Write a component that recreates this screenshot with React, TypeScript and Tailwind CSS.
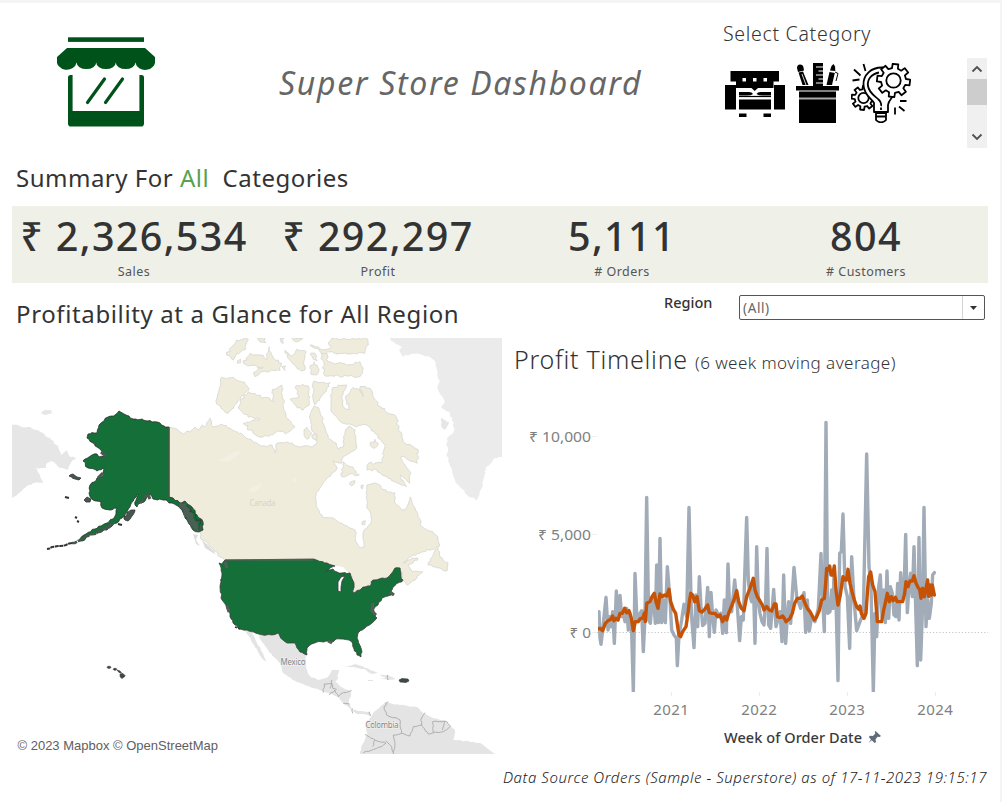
import React from "react";

type Pt = [number, number];

const toPoints = (flat: string): Pt[] =>
  flat
    .trim()
    .split(/\s+/)
    .map((p) => p.split(",").map(Number) as Pt);

/* Breaks each edge of a coastline into small, slightly displaced steps. */
const coast = (flat: string, amp = 1.2, closed = true, scale = 1, dx = 0, dy = 0): string => {
  const pts = toPoints(flat).map(([x, y]) => [x * scale + dx, y * scale + dy] as Pt);
  let seed = 17;
  const rnd = () => {
    seed = (seed * 16807) % 2147483647;
    return seed / 2147483647 - 0.5;
  };
  const out: string[] = [];
  const n = closed ? pts.length : pts.length - 1;
  for (let i = 0; i < n; i++) {
    const [x1, y1] = pts[i];
    const [x2, y2] = pts[(i + 1) % pts.length];
    const len = Math.hypot(x2 - x1, y2 - y1);
    out.push(`${x1.toFixed(1)},${y1.toFixed(1)}`);
    if (len > 55) continue;
    const steps = Math.floor(len / 2.2);
    for (let s = 1; s < steps; s++) {
      const t = s / steps;
      out.push(`${(x1 + (x2 - x1) * t + rnd() * amp * 2).toFixed(1)},${(y1 + (y2 - y1) * t + rnd() * amp * 2).toFixed(1)}`);
    }
  }
  if (!closed) out.push(pts[pts.length - 1].join(","));
  return "M" + out.join("L") + (closed ? "Z" : "");
};

const arctic = (flat: string) => coast(flat, 1.3, true, 1 / 3, 200, 330);
const south = (flat: string) => coast(flat, 0.6, false, 1 / 3, 200, 530);

const CANADA =
  "169,427 172,428 177,429 180,432 184,434 187,431 190,432 195,427 198,430 202,425 205,427 210,418 213,427 217,426 222,424 230,428 243,435 253,442 267,447 272,445 275,453 277,443 287,442 300,447 308,446 312,447 317,442 315,433 311,428 310,415 314,406 319,408 325,428 328,438 336,443 338,449 343,447 345,432 349,426 355,430 357,447 350,453 343,457 342,463 333,461 337,469 328,477 322,485 316,495 316,505 322,517 333,518 340,523 350,528 355,530 356,542 360,548 365,547 363,533 367,528 371,523 370,512 367,508 366,497 367,485 374,483 380,485 387,492 395,493 395,503 402,510 407,507 410,497 417,512 422,527 430,531 438,537 439,547 430,550 413,555 403,563 412,558 418,558 413,563 408,565 412,572 423,572 415,580 407,585 403,580 400,568 393,578 373,582 363,588 353,593 355,583 350,573 343,570 333,565 315,560 225,560 220,557 207,542 200,538 200,532 203,530 203,522 197,515 192,507 185,501 180,503 173,498 169,497";
const USA =
  "225,560 313,559 327,563 335,566 329,569 326,571 333,569 337,572 342,573 350,573 354,583 353,593 360,590 363,587 365,587 370,586 373,580 387,578 391,574 395,568 400,568 401,576 403,580 393,587 391,591 393,595 388,596 382,598 378,605 375,607 374,612 377,618 372,623 365,628 358,633 357,638 361,648 362,652 361,657 357,655 354,649 352,642 349,640 343,639 336,639 333,642 328,641 317,642 310,645 307,648 307,655 300,652 297,648 295,643 291,643 287,643 283,640 278,633 272,635 263,635 247,630 240,629 233,623 228,610 222,600 220,587 222,573 219,563 222,564";
const ALASKA =
  "119,411 124,414 129,416 133,419 142,419 147,421 152,422 160,423 164,426 169,427 169,497 173,498 180,503 185,501 192,507 197,515 203,522 203,530 199,532 193,530 188,522 185,518 182,510 178,506 172,503 163,500 153,499 151,495 147,494 145,501 140,503 137,507 135,505 138,494 134,499 130,507 127,512 122,518 117,523 107,530 100,532 90,535 82,541 78,541 84,535 95,529 107,523 113,519 116,514 117,508 110,510 102,508 101,502 93,500 89,493 90,485 94,482 97,478 104,475 103,468 97,471 88,468 83,461 92,455 97,454 99,457 105,456 100,449 97,447 87,438 88,434 97,433 99,425 104,421 108,417 115,415";
const GREENLAND =
  "390,338 502,338 502,457 495,458 492,462 486,467 483,485 477,500 467,495 461,488 455,480 450,466 447,453 447,438 453,433 454,423 450,414 441,407 445,402 438,390 439,380 437,370 434,360 430,357 420,354 411,354 403,357 399,350 402,347 396,344";
const SIBERIA =
  "12,425 18,425 22,427 30,427 40,432 50,438 58,446 61,455 67,450 70,457 76,458 71,463 68,470 60,468 52,461 47,463 46,468 35,468 40,475 43,483 33,483 25,488 18,494 12,498";
const MEXICO =
  "257,632 278,633 287,643 295,643 300,652 306,655 306,668 310,676 318,680 326,678 328,677 332,670 339,670 337,680 335,682 343,688 351,692 349,703 353,710 360,711 370,712 371,716 363,714 357,714 345,705 338,697 323,691 310,687 297,682 283,673 280,663 268,650 262,642";
const SOUTH_AMERICA =
  "360,754 362,745 367,735 366,730 369,720 374,712 385,702 390,703 400,705 417,707 423,713 433,718 443,720 455,730 453,740 465,741 480,743 488,749 495,754";

const ARCTIC_ISLANDS = [
  "62,145 100,142 125,155 148,178 115,210 85,250 70,240 50,222 58,180",
  "120,215 145,185 165,190 185,205 210,205 222,215 218,178 245,165 248,200 260,265 285,290 260,310 230,305 205,320 175,320 150,300 130,280 180,268 145,262 115,235",
  "80,75 95,50 110,30 145,28 135,60 110,70 100,90",
  "130,100 150,70 180,75 200,90 208,50 220,85 245,100 240,122 190,125 165,140 160,128 190,112 150,108",
  "255,60 275,78 290,58 315,62 315,120 297,118 285,105 262,82",
  "362,62 380,70 385,95 440,105 480,95 490,115 480,140 375,138",
  "330,45 355,50 370,60 395,50 385,38 400,25 500,25 505,45 495,70 450,72 400,68 365,70",
  "340,155 390,158 378,185 345,225 338,200",
  "285,172 308,162 325,168 328,225 305,240 270,208 298,200",
  "395,180 415,165 440,165 425,200 432,232 450,238 436,200 460,172 480,180 490,200 480,170 510,175 520,200 545,235 590,265 600,305 610,335 655,360 652,400 635,395 605,378 608,395 630,425 630,460 600,435 620,470 585,455 560,440 530,420 500,420 505,400 545,400 555,345 525,310 500,285 470,290 425,278 395,245",
  "425,440 430,395 450,410 478,435 450,432",
  "330,115 342,95 358,118 350,135 332,132",
  "510,345 525,328 535,340 525,355",
  "448,462 465,452 455,468",
  "245,110 258,108 255,122",
  "172,26 195,24 198,38 180,36",
  "240,26 252,25 250,40 244,38",
  "275,24 310,24 300,32 282,33",
  "330,72 345,70 352,92 340,88",
  "312,300 322,292 335,312 322,328 312,316",
  "335,318 350,312 348,330",
  "484,465 490,466 488,476 483,474",
  "112,100 122,88 122,98",
  "486,575 496,572 494,584 486,584",
];

/* Weekly profit, in thirds of a pixel on the plotting area. */
const WEEKLY =
  "27,635 30,715 33,733 38,690 43,640 48,592 54,690 58,650 62,680 68,635 73,730 79,573 84,660 90,586 95,650 100,640 105,665 110,625 115,690 120,640 125,695 130,875 135,520 140,640 145,665 150,640 155,632 160,755 165,650 170,292 176,660 181,670 186,610 191,595 196,670 200,495 205,668 210,415 215,668 220,600 226,668 232,500 240,600 245,690 252,705 259,715 262,797 267,705 275,660 282,613 290,650 297,322 304,640 312,743 318,585 323,680 328,530 333,620 338,677 345,670 353,562 358,710 363,577 368,650 373,697 378,630 388,650 393,640 398,700 403,600 409,698 414,492 419,630 425,635 434,540 442,620 449,722 454,650 460,660 465,500 470,352 475,540 480,590 485,605 490,540 495,730 500,440 505,600 510,640 516,665 522,675 527,600 531,445 536,675 542,685 551,568 558,680 565,655 570,635 576,725 581,525 587,730 592,650 596,605 602,670 607,580 612,502 620,590 632,625 638,590 642,578 647,697 652,600 658,693 665,650 675,665 685,625 693,460 698,600 703,695 708,67 713,640 720,635 725,570 729,625 732,520 738,600 744,842 749,460 754,455 759,342 765,560 772,590 779,745 785,470 792,600 800,692 810,665 820,640 830,162 837,500 843,560 850,875 855,640 860,710 866,560 871,525 876,650 881,570 886,668 891,513 896,655 901,560 907,580 912,645 918,650 923,550 927,660 932,518 937,600 942,580 947,403 952,638 957,560 962,520 967,590 972,440 977,620 982,797 987,412 992,780 997,640 1002,322 1008,680 1013,600 1018,655 1024,610 1028,525 1033,518";
const AVERAGE =
  "24,687 30,685 38,692 46,670 54,662 62,658 68,648 72,662 78,655 84,660 90,640 97,640 104,625 110,638 117,632 124,655 130,692 136,665 144,665 152,655 158,655 163,640 166,665 170,610 180,605 186,590 193,580 198,605 204,625 210,582 217,590 224,585 230,588 237,568 242,605 250,628 257,640 263,680 267,705 272,710 278,695 288,680 294,640 298,605 302,580 308,585 314,605 321,590 328,632 336,636 344,628 353,615 358,638 366,640 375,640 383,650 390,645 398,665 404,650 410,660 416,640 424,620 432,600 440,572 446,605 454,625 462,632 470,590 480,565 490,535 495,570 502,590 510,603 517,615 522,630 530,620 538,630 545,633 553,612 558,612 562,650 570,653 578,648 583,655 588,665 594,660 600,655 607,640 614,610 622,595 630,595 637,588 645,610 652,625 660,635 668,650 673,660 680,650 688,632 695,600 703,595 707,550 710,505 715,510 719,498 723,525 728,525 733,498 738,570 744,615 750,590 759,530 765,540 770,540 774,508 780,550 786,575 793,600 800,620 806,628 810,618 814,640 822,655 828,640 832,580 836,530 842,516 848,555 855,575 862,665 870,665 875,665 880,635 888,600 892,580 898,605 904,590 910,602 916,592 922,605 938,605 944,580 948,545 954,560 960,543 967,543 972,527 978,550 984,562 989,568 993,595 998,565 1003,590 1008,565 1013,540 1016,590 1020,555 1024,585 1027,555 1033,585";

const Land = ({ d, fill, stroke }: { d: string; fill: string; stroke?: string }) => (
  <path d={d} fill={fill} stroke={stroke ?? "none"} strokeWidth={0.8} strokeLinejoin="round" />
);

function StoreLogo() {
  return (
    <svg width="98" height="90" viewBox="57 37 98 90" className="shrink-0">
      <g fill="#00521b">
        <rect x="68" y="37.3" width="76" height="4.6" />
        <path d="M67 48H145L155 57V60A9.7 8.5 0 0 1 135.4 62.5A9.7 6.5 0 0 1 115.8 62.5A9.7 6.5 0 0 1 96.2 62.5A9.7 6.5 0 0 1 76.6 62.5A9.9 8.5 0 0 1 57 60V57Z" />
        <path d="M68 77.5Q68 75 70.5 75H72.6V111H139.4V75H141.5Q144 75 144 77.5V123.5Q144 126.6 141 126.6H71Q68 126.6 68 123.5Z" />
      </g>
      <g stroke="#00521b" strokeWidth="3.2" strokeLinecap="round">
        <path d="M104.5 79L87.5 102.5M122.5 79L105.5 102.5" />
      </g>
    </svg>
  );
}

function SofaIcon() {
  return (
    <svg width="60" height="46" viewBox="0 0 60 46">
      <path d="M5.5 0H54V10.500H48.5V17H33L29.700 20L26.500 17H11V10.500H5.5Z" fill="#000" />
      <path d="M0 14H11V38.5H0ZM49 14H60V38.5H49Z" fill="#000" />
      <path d="M14 21H24Q27 21 28 23Q26 24.500 22 24.500H14ZM46 21H35.500Q32.500 21 31.500 23Q33.500 24.500 37.500 24.500H46Z" fill="#000" />
      <path d="M14 28.500H46V38.500H14ZM14 42.500H21.500V46H14ZM38.500 42.500H46V46H38.500Z" fill="#000" />
      <path d="M14 25.500H46" stroke="#000" strokeWidth="1.200" />
      <path d="M17.500 7H21V10.500H17.500ZM28 7H31.500V10.500H28ZM38.500 7H42V10.500H38.500Z" fill="#fff" />
    </svg>
  );
}

function SuppliesIcon() {
  return (
    <svg width="43" height="60" viewBox="0 0 43 60">
      <path d="M17 0H27V23H17Z" fill="#000" />
      <path d="M20 4H27M22.500 8H27M20 12H27M22.500 16H27M20 20H27" stroke="#fff" strokeWidth="1" />
      <path d="M1 5Q1 1.500 4 1.500T7.500 4.500L8 7.500L2 9Z" fill="#000" />
      <path d="M2.500 9.500L7 8.600L12.500 22H6.500Z" fill="#000" />
      <path d="M6 11L10 22" stroke="#fff" strokeWidth=".8" />
      <path d="M35.500 3L37.500 1L39 3.500L39.300 8L34 7.500Z" fill="#000" />
      <path d="M33.500 9L38.800 10L36 22H30.500Z" fill="#000" />
      <path d="M39 9L42 10.500L40 18" fill="none" stroke="#000" strokeWidth="1" />
      <path d="M0 23H43V27.500H0ZM3 28.500H40V60H3Z" fill="#000" />
      <path d="M3 35.500H40" stroke="#aaa" strokeWidth="2" />
    </svg>
  );
}

/* Closed outline of a gear with square teeth. */
const gear = (cx: number, cy: number, ro: number, ri: number, teeth = 8) => {
  const out: string[] = [];
  for (let i = 0; i < teeth; i++) {
    const a = (i / teeth) * Math.PI * 2 + 0.12;
    [
      [ri, -0.24],
      [ro, -0.17],
      [ro, 0.17],
      [ri, 0.24],
    ].forEach(([r, o]) => out.push(`${(cx + r * Math.cos(a + o)).toFixed(2)},${(cy + r * Math.sin(a + o)).toFixed(2)}`));
  }
  return "M" + out.join("L") + "Z";
};

function TechIcon() {
  return (
    <svg width="60" height="60" viewBox="0 0 60 60" fill="none" stroke="#000" strokeWidth="1.8" strokeLinejoin="round">
      <path d={gear(12.5, 35, 12, 8.8)} />
      <circle cx="12.500" cy="35" r="5.2" />
      <path
        d="M32 4.500C20 4 12 12 12.500 22C13 32 20 35 23 40V49H37V42C37.500 38 40 36 42 33"
        fill="#fff"
      />
      <path d="M28 9.500C20 11 16 17 17 23C18 30 24 33 28 37C30 39 30.500 42 30 43" />
      <path d="M30 44.500V47" />
      <path d={gear(42.500, 17.500, 16.700, 12.500)} fill="#fff" />
      <circle cx="42.500" cy="17.500" r="7.200" />
      <path d="M25 50H35V57Q33 59.300 30 59.300T25 57ZM25 53.500H35" />
      <path d="M3 6.500L9.500 12.500M12.500 1L14.500 8M1.500 17.500L8.500 16.500M49 38H55.500M48 43.500L53.500 48M44 44.500V51.500" />
    </svg>
  );
}

function CategoryPicker() {
  return (
    <section className="w-[278px] pl-px">
      <h2 className="h-[38px] whitespace-nowrap pt-[1px] font-['Noto_Sans'] text-[19.5px] font-light leading-[26px] tracking-[0.7px] text-[#333]">
        Select Category
      </h2>
      <div className="flex justify-between">
        <div className="flex h-[60px] pl-[2px]">
          <button className="mt-[12px] block" aria-label="Furniture">
            <SofaIcon />
          </button>
          <button className="ml-[11px] mt-[5px] block" aria-label="Office Supplies">
            <SuppliesIcon />
          </button>
          <button className="ml-[12px] mt-[5px] block" aria-label="Technology">
            <TechIcon />
          </button>
        </div>
        <div className="mr-[13px] flex h-[90px] w-[20px] flex-col items-center bg-[#f0f0f0]">
          <svg width="12" height="8" viewBox="0 0 12 8" className="mt-[7px]">
            <path d="M1.500 6.500L6 2L10.500 6.500" fill="none" stroke="#505050" strokeWidth="1.8" />
          </svg>
          <div className="mt-[6px] h-[26px] w-full bg-[#cdcdcd]" />
          <svg width="12" height="8" viewBox="0 0 12 8" className="mt-[28px]">
            <path d="M1.500 1.500L6 6L10.500 1.500" fill="none" stroke="#505050" strokeWidth="1.8" />
          </svg>
        </div>
      </div>
    </section>
  );
}

const KPIS = [
  { value: "₹ 2,326,534", label: "Sales" },
  { value: "₹ 292,297", label: "Profit" },
  { value: "5,111", label: "# Orders" },
  { value: "804", label: "# Customers" },
];

function KpiBand() {
  return (
    <div className="ml-[12px] flex h-[77px] w-[976px] justify-between bg-[#eff0e8]">
      {KPIS.map((k) => (
        <div key={k.label} className="flex w-[244px] flex-col items-center">
          <div className="mt-[4px] h-[53px] whitespace-nowrap font-['Noto_Sans'] text-[39.5px] font-medium leading-[52px] tracking-[1.35px] text-[#333]">
            {k.value}
          </div>
          <div className="font-['Noto_Sans'] text-[12.5px] leading-[18px] tracking-[0.45px] text-[#555]">{k.label}</div>
        </div>
      ))}
    </div>
  );
}

function ProfitMap() {
  return (
    <svg width="490" height="417" viewBox="12 338 490 417" className="block shrink-0">
      <Land d={coast(GREENLAND, 1)} fill="#ebebeb" />
      <Land d={coast("441,418 449,422 445,430 441,426", 0.8)} fill="#e6e6e6" />
      <Land d={coast(SIBERIA, 0.8)} fill="#e6e6e6" />
      <Land d={coast("41,413 45,410 51,410 52,413 45,415", 0.4)} fill="#e6e6e6" />
      <Land d={coast(CANADA, 1)} fill="#efecdb" stroke="#d6d6d2" />
      {ARCTIC_ISLANDS.map((d) => (
        <Land key={d} d={arctic(d)} fill="#efecdb" stroke="#d6d6d2" />
      ))}
      <Land d={coast("428,565 435,550 438,548 440,557 448,563 447,571 440,568", 0.8)} fill="#efecdb" stroke="#d6d6d2" />
      <Land d="M193 534L198 535L196 540L200 546L196 544Z M202 540L208 545L216 554L213 553L205 548Z" fill="#dedede" />
      <path d="M218 461L232 453L242 450L236 457L228 462ZM248 490L256 486L262 482L259 489L253 493ZM292 480L296 477V483Z" fill="#f3f0e3" />
      <path d="M327 570L336 566L343 567L349 573L341 572L334 569ZM349 576L354 580L355 587L352 584ZM355 592L364 588L359 592Z" fill="#fff" />
      <Land d={coast(MEXICO, 0.6)} fill="#e4e4e4" />
      <Land d={coast("245,630 252,632 257,643 262,652 268,663 261,657 254,645", 0.5)} fill="#e4e4e4" />
      <Land d={coast(SOUTH_AMERICA, 0.6)} fill="#e4e4e4" />
      <Land d={coast("346,667 355,664 362,666 370,670 378,673 372,674 364,669 353,667", 0.4)} fill="#e4e4e4" />
      <Land d={coast("380,675 388,675 396,679 388,680 380,679 386,678", 0.4)} fill="#e4e4e4" />
      <path d="M368 680.500H373" stroke="#e4e4e4" />
      <g fill="none" stroke="#a9a9a9" strokeWidth="0.9">
        <path d={south("370,488 373,462 395,460 390,475")} />
        <path d={south("395,450 398,475 410,478")} />
        <path d={south("388,495 405,480 415,500")} />
        <path d={south("415,500 430,488 455,482")} />
        <path d={south("430,520 448,522")} />
        <path d={south("457,535 458,550")} />
        <path d={south("508,545 512,558")} />
        <path d={south("565,515 552,530 560,555 600,570 605,610 580,615 585,640 580,672")} />
        <path d={south("495,613 525,630 558,640 545,650 515,660 490,668")} />
        <path d={south("525,630 518,650")} />
        <path d={south("558,632 575,650 580,668")} />
        <path d={south("605,610 630,618 640,590 665,585 662,570 675,548")} />
        <path d={south("665,585 685,612 700,608 698,575 735,573")} />
        <path d={south("700,608 730,605 752,588 735,573 728,600")} />
        <path d={south("563,435 564,450")} />
      </g>
      <Land d={coast(USA, 0.7)} fill="#156f38" stroke="#3d3d3d" />
      <path d="M338 591L338 582L341 577L345 576L342 581L341 587L341 592Z" fill="#fff" stroke="#3d3d3d" strokeWidth=".8" />
      <path d="M225 560H313" stroke="#58665c" strokeWidth="1.2" />
      <path d="M225 562L227 568M373 603L372 611L376 615M328 641L332 643M227 606L229 612M390 592L394 595" stroke="#555d57" strokeWidth="3" fill="none" />
      <path d="M235 627L240 629" stroke="#333" strokeWidth="1.5" strokeDasharray="2 1.500" />
      <Land d={coast(ALASKA, 0.9)} fill="#156f38" stroke="#2d2d2d" />
      <path d="M169.300 427V497" stroke="#6c6c5e" strokeWidth="1.3" />
      <path d={coast("183,504 187,510 190,518 195,525 200,529", 1.8, false)} fill="none" stroke="#4b6054" strokeWidth="6" />
      <path d={coast("187,505 193,512 200,524 199,530", 2, false)} fill="none" stroke="#333" strokeWidth=".8" />
      <Land d={coast("124,519 127,513 131,510 135,510 132,516 128,521", 1)} fill="#46584d" stroke="#333" />
      <Land d={coast("84,500 87,497 91,499 90,502 86,502", 0.5)} fill="#46584d" stroke="#333" />
      <Land d={coast("69,476 73,474 77,477 81,478 79,480 75,479", 0.5)} fill="#46584d" stroke="#333" />
      <path d="M65 497L69 498M75 517L77 518M77 521L79 522M118 524L122 525" stroke="#333" strokeWidth="2" />
      <path d={coast("113,524 106,528 98,532 88,536 78,541 72,543", 1, false)} fill="none" stroke="#4a5650" strokeWidth="2.600" strokeDasharray="6 1" />
      <path d={coast("72,543 66,545 58,546 52,547 47,549", 0.6, false)} fill="none" stroke="#333" strokeWidth="2" strokeDasharray="4 .6" />
      <path d="M144 497L148 495L150 499M101 452L106 456M103 473L98 478M140 503L143 500" stroke="#4b5750" strokeWidth="3" fill="none" />
      <g fill="#3f4a48" stroke="#333" strokeWidth=".6">
        <ellipse cx="109" cy="667.300" rx="1.900" ry="1.100" />
        <ellipse cx="115" cy="669.300" rx="1.700" ry="1" />
        <path d="M117 670L120 671L121.500 673L119 672.500ZM120 674L123 673.500L125.300 676L122 678.600L120.200 677Z" />
        <path d="M399 680L402 678.500L408 679L409 681L406 682.500L400 682Z" />
      </g>
      <g fontFamily="'Noto Sans', sans-serif" fontSize="8">
        <text x="249.500" y="505.500" fill="#d9d6c9" textLength="26">
          Canada
        </text>
        <text x="280.500" y="665" fill="#858585" textLength="25" stroke="#efefef" strokeWidth="1.500" paintOrder="stroke">
          Mexico
        </text>
        <text x="365.500" y="727.500" fill="#858585" textLength="33" stroke="#efefef" strokeWidth="1.500" paintOrder="stroke">
          Colombia
        </text>
      </g>
      <text x="17.500" y="750" fontFamily="'Liberation Sans', sans-serif" fontSize="12.800" fill="#606060" textLength="200.500" lengthAdjust="spacingAndGlyphs">
        © 2023 Mapbox © OpenStreetMap
      </text>
    </svg>
  );
}

function ProfitTimeline() {
  return (
    <section className="w-[488px]">
      <h2 className="h-[46px] whitespace-nowrap pl-[12px] font-['Noto_Sans'] text-[25px] font-light leading-[43px] tracking-[0.72px] text-[#333]">
        Profit Timeline <span className="text-[17px] tracking-[0.44px]">(6 week moving average)</span>
      </h2>
      <svg width="488" height="371" viewBox="502 384 488 371" className="block">
        <path d="M597 632.500H988" stroke="#c6c6c6" strokeDasharray="1.200 2" />
        <path d="M592 436.500H597M592 534.500H597M592 632.500H597M671.500 692V696M759.500 692V696M847.500 692V696M935.500 692V696" stroke="#eeeeee" />
        <clipPath id="plot">
          <rect x="598" y="400" width="390" height="292" />
        </clipPath>
        <g clipPath="url(#plot)" fill="none" strokeLinejoin="round" strokeLinecap="round">
          <g transform="translate(590 400) scale(.33333)">
            <polyline points={WEEKLY} stroke="#a1acb8" strokeWidth="10.200" />
            <polyline points={AVERAGE} stroke="#c55205" strokeWidth="10.200" />
          </g>
        </g>
        <g fontFamily="'Noto Sans', sans-serif" fontSize="14.500" fill="#808080">
          <text x="529" y="441.500" textLength="62" lengthAdjust="spacingAndGlyphs">
            ₹ 10,000
          </text>
          <text x="538" y="539.500" textLength="53" lengthAdjust="spacingAndGlyphs">
            ₹ 5,000
          </text>
          <text x="569.500" y="637.500" textLength="21.500" lengthAdjust="spacingAndGlyphs">
            ₹ 0
          </text>
          {[2021, 2022, 2023, 2024].map((y, i) => (
            <text key={y} x={671 + i * 88} y="715" fontSize="15" textAnchor="middle" textLength="35.500">
              {y}
            </text>
          ))}
        </g>
        <text x="724" y="743" fontFamily="'Noto Sans', sans-serif" fontSize="14.500" fontWeight="500" fill="#3a3a3a" textLength="138">
          Week of Order Date
        </text>
        <path
          d="M875.500 731L881 736L879.500 737L877.500 736.800L875.500 739.500L876 742L874.500 743L871.800 740.300L868.500 743L871 739.500L868.800 737L870 735.800L872.800 736L875.300 733.700L874.800 731.800Z"
          fill="#5f6b7a"
        />
      </svg>
    </section>
  );
}

export default function App() {
  return (
    <div className="flex h-[802px] w-[1002px] flex-col overflow-hidden border-r-2 border-t-[3px] border-[#f4f4f4] bg-white">
      <header className="flex h-[152px] pl-[57px]">
        <div className="pt-[34px]">
          <StoreLogo />
        </div>
        <h1 className="w-[569px] whitespace-nowrap pl-[124px] pt-[56px] font-['Noto_Sans'] text-[32px] italic leading-[48px] tracking-[1.65px] text-[#666]">
          Super Store Dashboard
        </h1>
        <div className="pt-[17px]">
          <CategoryPicker />
        </div>
      </header>

      <h2 className="h-[51px] whitespace-pre pl-[16px] pt-[5px] font-['Noto_Sans'] text-[24px] leading-[36px] tracking-[0.5px] text-[#333]">
        Summary For <span className="text-[#59a14f]">All</span>
        {"  Categories"}
      </h2>

      <KpiBand />

      <div className="flex h-[55px]">
        <h2 className="w-[664px] whitespace-nowrap pl-[16px] pt-[13px] font-['Noto_Sans'] text-[24px] leading-[36px] tracking-[0.62px] text-[#333]">
          Profitability at a Glance for All Region
        </h2>
        <label className="w-[75px] pt-[8px] font-['Noto_Sans'] text-[14.5px] font-medium leading-[22px] text-[#333]">Region</label>
        <div className="mt-[12px] flex h-[25px] w-[246px] rounded-[2px] border border-[#555] bg-white">
          <div className="flex-1 pl-[3px] pt-[2px] font-['Noto_Sans'] text-[13.5px] leading-[21px] tracking-[0.6px] text-[#666]">(All)</div>
          <div className="flex w-[22px] items-center justify-center border-l border-[#d5d5d5]">
            <svg width="7" height="4" viewBox="0 0 7 4">
              <path d="M0 0H7L3.500 4Z" fill="#333" />
            </svg>
          </div>
        </div>
      </div>

      <main className="flex h-[417px] pl-[12px]">
        <ProfitMap />
        <ProfitTimeline />
      </main>

      <footer className="flex justify-end whitespace-nowrap pr-[13px] pt-[11px] font-['Noto_Sans'] text-[15px] font-light italic leading-[22px] tracking-[0.57px] text-[#222]">
        Data Source Orders (Sample - Superstore) as of 17-11-2023 19:15:17
      </footer>
    </div>
  );
}
